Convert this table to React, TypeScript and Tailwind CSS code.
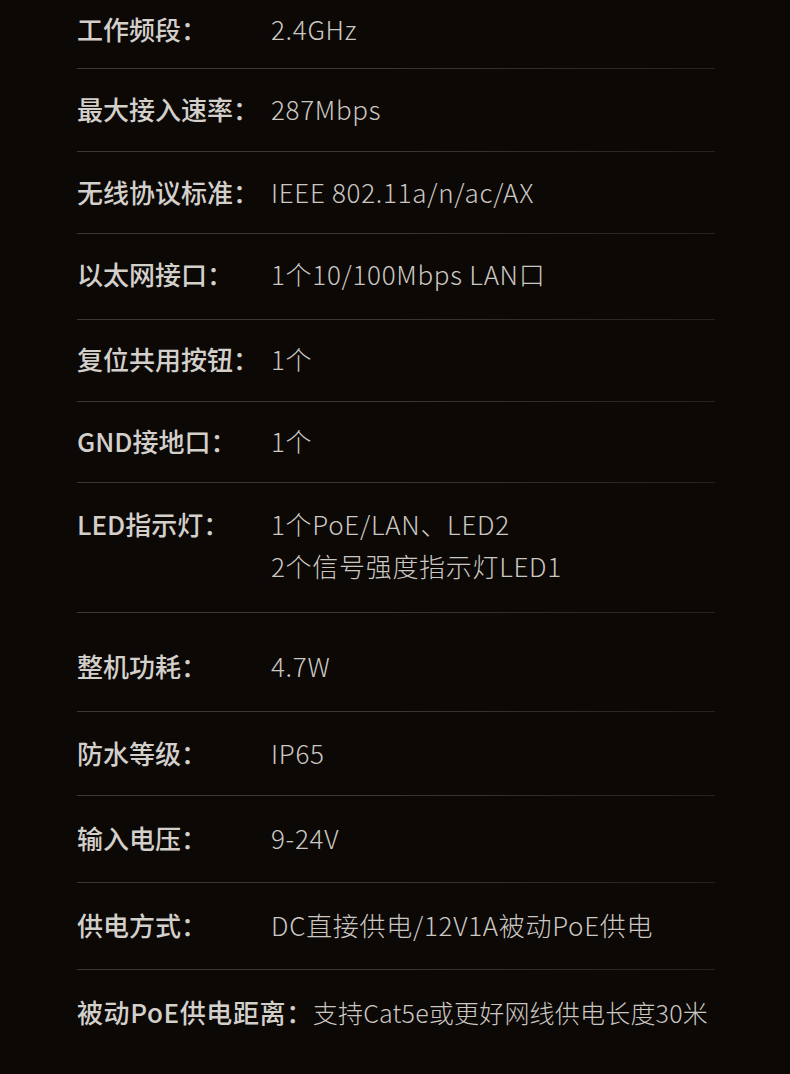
const ROWS: { label: string; value: string[]; pt: number; pb: number }[] = [
  { label: "工作频段：", value: ["2.4GHz"], pt: 8, pb: 18 },
  { label: "最大接入速率：", value: ["287Mbps"], pt: 19, pb: 21 },
  { label: "无线协议标准：", value: ["IEEE 802.11a/n/ac/AX"], pt: 19, pb: 20 },
  { label: "以太网接口：", value: ["1个10/100Mbps LAN口"], pt: 19, pb: 24 },
  { label: "复位共用按钮：", value: ["1个"], pt: 18, pb: 21 },
  { label: "GND接地口：", value: ["1个"], pt: 18, pb: 20 },
  { label: "LED指示灯：", value: ["1个PoE/LAN、LED2", "2个信号强度指示灯LED1"], pt: 20, pb: 25 },
  { label: "整机功耗：", value: ["4.7W"], pt: 32, pb: 24 },
  { label: "防水等级：", value: ["IP65"], pt: 20, pb: 21 },
  { label: "输入电压：", value: ["9-24V"], pt: 21, pb: 23 },
  { label: "供电方式：", value: ["DC直接供电/12V1A被动PoE供电"], pt: 21, pb: 23 },
];

const font = { fontFamily: '"Noto Sans CJK SC", "Noto Sans", sans-serif' };

const SpecRow = ({ label, value, pt, pb }: (typeof ROWS)[number]) => (
  <div className="flex flex-col">
    <div className="flex" style={{ paddingTop: pt, paddingBottom: pb }}>
      <div className="w-[194px] shrink-0 font-medium text-[#d3cfcb]">{label}</div>
      <div className="flex flex-col font-light tracking-[0.7px] text-[#cbc7c3]">
        {value.map((v) => (
          <span key={v}>{v}</span>
        ))}
      </div>
    </div>
    <div className="h-px bg-gradient-to-r from-[#3a3632] via-[#3a3632] to-[#24211e]" />
  </div>
);

export default function App() {
  return (
    <div
      className="w-[790px] h-[1074px] overflow-hidden bg-[#0b0806] text-[26px] leading-[42px]"
      style={font}
    >
      <div className="ml-[77px] w-[638px] flex flex-col">
        {ROWS.map((r) => (
          <SpecRow key={r.label} {...r} />
        ))}
        <div className="flex items-baseline pt-[21px] whitespace-nowrap">
          <span className="font-medium tracking-[0.6px] text-[#d3cfcb]">被动PoE供电距离：</span>
          <span className="font-light text-[25px] tracking-[0.2px] text-[#cbc7c3]">
            支持Cat5e或更好网线供电长度30米
          </span>
        </div>
      </div>
    </div>
  );
}
